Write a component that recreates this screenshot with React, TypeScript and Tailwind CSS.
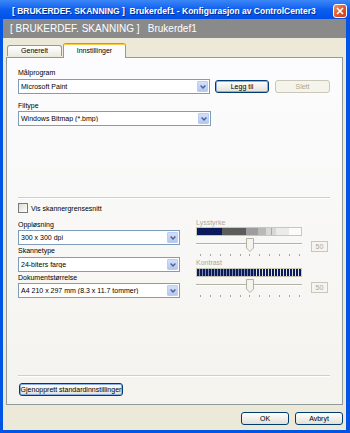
import React from "react";

type ComboProps = {
  value: string;
  width: string;
};

function Combo({ value, width }: ComboProps) {
  return (
    <div className={`${width} h-[15px] border border-[#7f9db9] bg-white flex items-center`}>
      <span className="flex-1 pl-[2px] text-[7px] leading-none text-black whitespace-nowrap overflow-hidden">
        {value}
      </span>
      <div className="w-[11px] h-[11px] mr-[1px] rounded-[1px] border border-[#bccdf3] bg-gradient-to-b from-[#d3e0fc] to-[#b3c7f3] flex items-center justify-center">
        <svg width="6" height="4" viewBox="0 0 6 4">
          <path d="M0.6 0.6 L3 3 L5.4 0.6" stroke="#4d6185" strokeWidth="1.4" fill="none" />
        </svg>
      </div>
    </div>
  );
}

type BtnProps = {
  label: string;
  width: string;
  focused?: boolean;
  disabled?: boolean;
};

function XpButton({ label, width, focused, disabled }: BtnProps) {
  if (disabled) {
    return (
      <div className={`${width} h-[13px] rounded-[3px] border border-[#c9c7ba] bg-[#f5f4ea] text-[7px] leading-none text-[#aca899] flex items-center justify-center`}>
        {label}
      </div>
    );
  }
  return (
    <div
      className={`${width} h-[13px] rounded-[3px] border border-[#003c74] bg-gradient-to-b from-white to-[#e3e0d5] text-[7px] leading-none text-black flex items-center justify-center whitespace-nowrap ${
        focused ? "shadow-[inset_0_0_0_1px_#8fb0e6]" : ""
      }`}
    >
      {label}
    </div>
  );
}

function Slider() {
  const ticks = [0, 1, 2, 3, 4, 5, 6, 7, 8, 9, 10];
  return (
    <div className="flex items-start">
      <div className="w-[106px] h-[19px] relative">
        {/* track */}
        <div className="absolute left-0 right-0 top-[5px] h-[2px] border-t border-[#b3b1a6] bg-white" />
        {/* thumb */}
        <svg className="absolute left-[50px] top-0" width="8" height="14" viewBox="0 0 8 14">
          <path d="M0.5 0.5 H7.5 V10 L4 13.5 L0.5 10 Z" fill="#f4f3ee" stroke="#b3b1a6" />
        </svg>
        {/* ticks */}
        <div className="absolute left-[4px] right-[2px] top-[16px] flex justify-between">
          {ticks.map((t) => (
            <div key={t} className="w-[1px] h-[2px] bg-[#a7a59a]" />
          ))}
        </div>
      </div>
      <div className="ml-[9px] mt-[3px] w-[17px] h-[11px] border border-[#c9c7ba] bg-[#f5f4ee] text-[7px] leading-none text-[#aca899] flex items-center justify-center">
        50
      </div>
    </div>
  );
}

export default function App() {
  const stripes = Array.from({ length: 35 }, (_, i) => i);

  return (
    <div className="w-[350px] h-[433px] flex flex-col bg-[#0055e5] overflow-hidden font-['Liberation_Sans',Arial,sans-serif]">
      {/* Title bar */}
      <div className="h-[19px] shrink-0 flex items-start pl-[12px] pr-[3px] bg-gradient-to-b from-[#3b86f6] via-[#0b5ef0] to-[#0250e6]">
        <span className="mt-[6px] text-[8.5px] leading-[10px] font-bold text-white whitespace-pre [text-shadow:1px_1px_0_#0a2a8a]">
          {"[ BRUKERDEF. SKANNING ]  Brukerdef1 - Konfigurasjon av ControlCenter3"}
        </span>
        <div className="ml-auto mt-[4px] w-[14px] h-[14px] rounded-[3px] border border-white bg-gradient-to-br from-[#f2956a] via-[#e05a2f] to-[#c73e16] flex items-center justify-center">
          <svg width="8" height="8" viewBox="0 0 8 8">
            <path d="M1 1 L7 7 M7 1 L1 7" stroke="white" strokeWidth="1.6" />
          </svg>
        </div>
      </div>

      {/* Client */}
      <div className="flex-1 ml-[3px] mr-[4px] mb-[3px] bg-[#ece9d8] flex flex-col">
        {/* grey header */}
        <div className="h-[19px] shrink-0 bg-[#8a8a8a] pl-[7px] text-[10px] leading-[19px] text-white whitespace-pre">
          {"[ BRUKERDEF. SKANNING ]   Brukerdef1"}
        </div>

        {/* tabs */}
        <div className="h-[19px] shrink-0 flex items-end pl-[4px] relative z-10">
          <div className="w-[55px] h-[11px] mb-[1px] rounded-t-[3px] border border-b-0 border-[#919b9c] bg-gradient-to-b from-white to-[#ecebe5] text-[7px] leading-[10px] text-black text-center">
            Generelt
          </div>
          <div className="w-[63px] h-[15px] ml-[1px] mb-[-1px] rounded-t-[3px] border border-b-0 border-[#919b9c] border-t-[#e68b2c] bg-[#fcfcfe] flex flex-col">
            <div className="h-[1px] bg-[#ffc83c]" />
            <div className="flex-1 text-[7px] leading-[11px] text-black text-center">Innstillinger</div>
          </div>
        </div>

        {/* panel */}
        <div className="h-[348px] shrink-0 mx-[3px] border border-[#919b9c] bg-gradient-to-b from-[#fcfcfe] to-[#f4f3ee] flex flex-col pl-[11px] pr-[12px]">
          <div className="mt-[10px] h-[9px] text-[7px] leading-[9px] text-black">Målprogram</div>
          <div className="mt-[2px] flex items-center">
            <Combo value="Microsoft Paint" width="w-[193px]" />
            <div className="ml-[5px]">
              <XpButton label="Legg til" width="w-[54px]" focused />
            </div>
            <div className="ml-[6px]">
              <XpButton label="Slett" width="w-[55px]" disabled />
            </div>
          </div>
          <div className="mt-[7px] h-[9px] text-[7px] leading-[9px] text-black">Filtype</div>
          <div className="mt-[1px]">
            <Combo value="Windows Bitmap (*.bmp)" width="w-[193px]" />
          </div>

          <div className="mt-[71px] h-[2px] border-t border-[#d0d0bf] bg-white" />

          <div className="mt-[4px] flex items-center">
            <div className="w-[10px] h-[10px] border border-[#7a7a7a] bg-gradient-to-br from-[#dcdcd7] to-white" />
            <span className="ml-[3px] text-[7px] leading-none text-black">Vis skannergrensesnitt</span>
          </div>

          <div className="mt-[5px] flex items-start">
            {/* left column */}
            <div className="w-[162px] pt-[2px] flex flex-col">
              <div className="h-[9px] text-[7px] leading-[9px] text-black">Oppløsning</div>
              <div className="mt-[1px]">
                <Combo value="300 x 300 dpi" width="w-[162px]" />
              </div>
              <div className="mt-[1px] h-[9px] text-[7px] leading-[9px] text-black">Skannetype</div>
              <div className="mt-[2px]">
                <Combo value="24-biters farge" width="w-[162px]" />
              </div>
              <div className="mt-[1px] h-[9px] text-[7px] leading-[9px] text-black">Dokumentstørrelse</div>
              <div className="mt-[1px]">
                <Combo value="A4 210 x 297 mm (8.3 x 11.7 tommer)" width="w-[162px]" />
              </div>
            </div>

            {/* right column */}
            <div className="ml-[16px] flex flex-col">
              <div className="h-[9px] text-[7px] leading-[9px] text-[#aca899]">Lysstyrke</div>
              <div className="w-[106px] h-[9px] border border-[#c9c7ba] flex">
                <div className="w-[25px] bg-[#0b1a5a]" />
                <div className="w-[24px] bg-[#5c5c5c]" />
                <div className="w-[12px] bg-[#9d9d9d]" />
                <div className="w-[8px] bg-[#b9b9b9]" />
                <div className="w-[5px] bg-[#d8d8d8]" />
                <div className="w-[1px] bg-[#a9a9a9]" />
                <div className="w-[4px] bg-[#d8d8d8]" />
                <div className="w-[13px] bg-[#ebebeb]" />
                <div className="flex-1 bg-[#fbfbfb]" />
              </div>
              <div className="mt-[2px]">
                <Slider />
              </div>
              <div className="mt-[1px] h-[9px] text-[7px] leading-[9px] text-[#aca899]">Kontrast</div>
              <div className="mt-[1px] w-[106px] h-[9px] border border-[#c9c7ba] flex overflow-hidden">
                {stripes.map((i) => (
                  <div key={i} className="flex shrink-0">
                    <div className="w-[2px] bg-[#0b1a5a]" />
                    <div className={i < 19 ? "w-[1px] bg-[#7f8bb0]" : "w-[1px] bg-[#e4e4e4]"} />
                  </div>
                ))}
              </div>
              <div className="mt-[2px]">
                <Slider />
              </div>
            </div>
          </div>

          <div className="mt-auto h-[2px] border-t border-[#d0d0bf] bg-white" />
          <div className="mt-[6px] mb-[8px] pl-[1px]">
            <XpButton label="Gjenopprett standardinnstillinger" width="w-[104px]" focused />
          </div>
        </div>

        {/* bottom buttons */}
        <div className="flex-1 flex items-start justify-end pt-[7px] pr-[3px]">
          <XpButton label="OK" width="w-[48px]" />
          <div className="ml-[6px]">
            <XpButton label="Avbryt" width="w-[48px]" />
          </div>
        </div>
      </div>
    </div>
  );
}
